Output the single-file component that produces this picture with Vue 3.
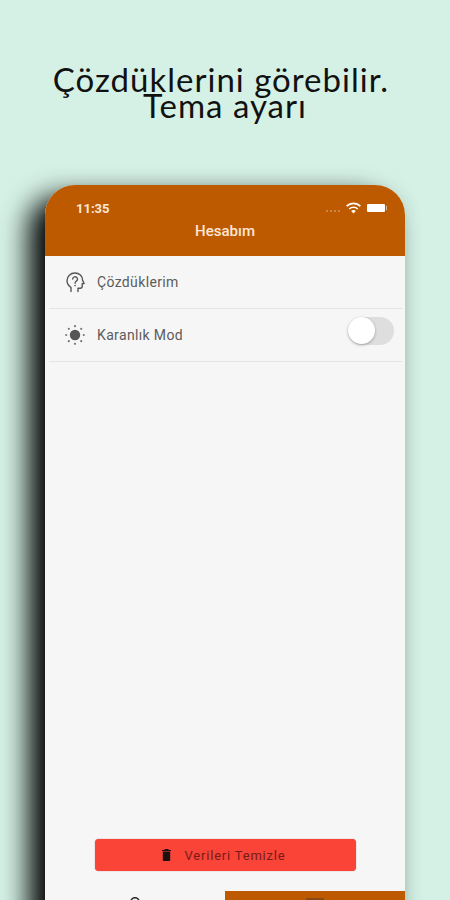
<template>
  <div class="page">
    <h1 class="title">
      <span class="title-first">Çözdüklerini görebilir.</span>
      <span>Tema ayarı</span>
    </h1>

    <div class="phone">
      <header class="app-header">
        <div class="status-bar">
          <span class="time">11:35</span>
          <div class="status-icons">
            <span class="signal">
              <i v-for="n in 4" :key="n"></i>
            </span>
            <svg class="wifi" width="17" height="12" viewBox="0 0 15 11">
              <path d="M7.5 10.6 5.4 8.3a3 3 0 0 1 4.2 0z" fill="#fff" />
              <path d="M3.6 6.4a5.6 5.6 0 0 1 7.8 0" fill="none" stroke="#fff" stroke-width="1.5" />
              <path d="M1.2 3.8a9 9 0 0 1 12.6 0" fill="none" stroke="#fff" stroke-width="1.5" />
            </svg>
            <span class="battery"></span>
          </div>
        </div>
        <div class="header-title">Hesabım</div>
      </header>

      <div class="list">
        <div class="row">
          <svg class="row-icon" width="22" height="22" viewBox="0 0 22 22" fill="none" stroke="#555" stroke-width="1.4">
            <path d="M7 20.500v-4C4.500 14.600 3 12.400 3 9.700 3 5.300 6.500 2 11 2c4.400 0 7.500 3 7.500 7l1.600 3.600h-1.900v2.600c0 1.300-.9 2-2 2h-2.200v3.300" stroke-linejoin="round" stroke-linecap="round" />
            <path d="M8.700 8a2.400 2.400 0 1 1 3.600 2.200c-.8.500-1.200 1-1.200 2" stroke-linecap="round" />
            <circle cx="11.100" cy="14.600" r=".8" fill="#555" stroke="none" />
          </svg>
          <span class="row-label">Çözdüklerim</span>
        </div>
        <div class="row">
          <svg class="row-icon" width="22" height="22" viewBox="0 0 22 22" fill="#555">
            <circle cx="11" cy="11" r="5.200" />
            <g fill="#777">
              <circle cx="11" cy="2.200" r="1.100" />
              <circle cx="11" cy="19.800" r="1.100" />
              <circle cx="2.200" cy="11" r="1.100" />
              <circle cx="19.800" cy="11" r="1.100" />
              <circle cx="4.800" cy="4.800" r="1.100" />
              <circle cx="17.200" cy="4.800" r="1.100" />
              <circle cx="4.800" cy="17.200" r="1.100" />
              <circle cx="17.200" cy="17.200" r="1.100" />
            </g>
          </svg>
          <span class="row-label">Karanlık Mod</span>
          <button class="switch" type="button" aria-label="Karanlık Mod">
            <span class="knob"></span>
          </button>
        </div>
      </div>

      <button class="clear-btn" type="button">
        <svg width="9" height="12" viewBox="0 0 9 12" fill="#1c1010">
          <path d="M0 1h9v1H0zM2.500 0h4v1h-4zM.8 2.600h7.400V11a1 1 0 0 1-1 1H1.800a1 1 0 0 1-1-1z" />
        </svg>
        <span>Verileri Temizle</span>
      </button>

      <nav class="tabbar">
        <div class="tab">
          <svg width="18" height="20" viewBox="0 0 18 20" fill="none" stroke="#222" stroke-width="1.600">
            <circle cx="9" cy="6" r="4.200" />
            <path d="M1.500 19c0-4 3.400-6 7.500-6s7.500 2 7.500 6" />
          </svg>
        </div>
        <div class="tab active">
          <svg width="18" height="20" viewBox="0 0 18 20" fill="#8a4a16">
            <rect x="0" y="0" width="18" height="3" />
          </svg>
        </div>
      </nav>
    </div>
  </div>
</template>

<script setup>
</script>

<style>
html,
body {
  margin: 0;
  overflow: hidden;
}
</style>

<style scoped>
.page {
  width: 450px;
  height: 900px;
  overflow: hidden;
  background: #d5f1e5;
  display: flex;
  flex-direction: column;
  box-sizing: border-box;
  padding-top: 66px;
}

.title {
  flex-shrink: 0;
  margin: 0 0 51px;
  display: flex;
  flex-direction: column;
  align-items: center;
  font-family: Lato, sans-serif;
  font-size: 33px;
  font-weight: 400;
  letter-spacing: 1px;
  line-height: 26px;
  height: 68px;
  color: #111;
}

.title-first {
  margin-right: 8px;
}

.phone {
  flex-shrink: 0;
  height: 765px;
  margin: 0 45px;
  display: flex;
  flex-direction: column;
  background: #f6f6f6;
  border-radius: 30px 30px 0 0;
  box-shadow: -16px 12px 28px #000, 6px 4px 18px rgba(0, 0, 0, 0.03);
  font-family: Roboto, sans-serif;
}

.app-header {
  height: 71px;
  flex-shrink: 0;
  background: #bd5a00;
  color: #fff;
  border-radius: 30px 30px 0 0;
  box-sizing: border-box;
  padding: 15px 31px 0;
  display: flex;
  flex-direction: column;
}

.status-bar {
  display: flex;
  align-items: center;
  justify-content: space-between;
  height: 16px;
  color: #fbe6d6;
}

.time {
  font-size: 13px;
  font-weight: 700;
}

.status-icons {
  display: flex;
  align-items: center;
  gap: 5px;
  margin-right: -11px;
}

.signal {
  display: flex;
  gap: 2px;
  margin-top: 5px;
}

.signal i {
  width: 2px;
  height: 2px;
  border-radius: 50%;
  background: rgba(255, 255, 255, 0.35);
}

.battery {
  position: relative;
  width: 18px;
  height: 8px;
  background: #fff;
  border-radius: 1px;
}

.battery::after {
  content: "";
  position: absolute;
  right: -2px;
  top: 2px;
  width: 1px;
  height: 4px;
  background: rgba(255, 255, 255, 0.6);
}

.header-title {
  margin-top: 6px;
  text-align: center;
  font-size: 15px;
  font-weight: 500;
  color: #fbe6d6;
}

.list {
  flex: 1;
  padding: 0 3px 0 4px;
}

.row {
  height: 53px;
  display: flex;
  align-items: center;
  border-bottom: 1px solid #e4e4e4;
  padding: 0 8px 0 15px;
  box-sizing: border-box;
}

.row-icon {
  flex-shrink: 0;
  margin-right: 11px;
}

.row-label {
  flex: 1;
  font-size: 14px;
  letter-spacing: 0.35px;
  color: #5c5c5c;
}

.switch {
  position: relative;
  width: 46px;
  height: 28px;
  margin-top: -8px;
  padding: 0;
  border: 0;
  border-radius: 14px;
  background: #dedede;
}

.knob {
  position: absolute;
  left: 0;
  top: 0;
  width: 27px;
  height: 27px;
  border-radius: 50%;
  background: #fff;
  box-shadow: 0 1px 3px rgba(0, 0, 0, 0.3);
}

.clear-btn {
  flex-shrink: 0;
  align-self: center;
  width: 261px;
  height: 32px;
  margin-left: 1px;
  margin-bottom: 20px;
  padding: 0 4px 0 0;
  border: 0;
  border-radius: 4px;
  background: #f94437;
  box-shadow: 0 0 1px rgba(120, 20, 10, 0.7);
  display: flex;
  align-items: center;
  justify-content: center;
  gap: 14px;
  color: #7a1a18;
  font-family: Roboto, sans-serif;
  font-size: 13px;
  letter-spacing: 0.8px;
}

.tabbar {
  flex-shrink: 0;
  height: 59px;
  display: flex;
}

.tab {
  flex: 1;
  display: flex;
  justify-content: center;
  padding-top: 5px;
}

.tab.active {
  background: #bd5a00;
  padding-top: 7px;
}
</style>
